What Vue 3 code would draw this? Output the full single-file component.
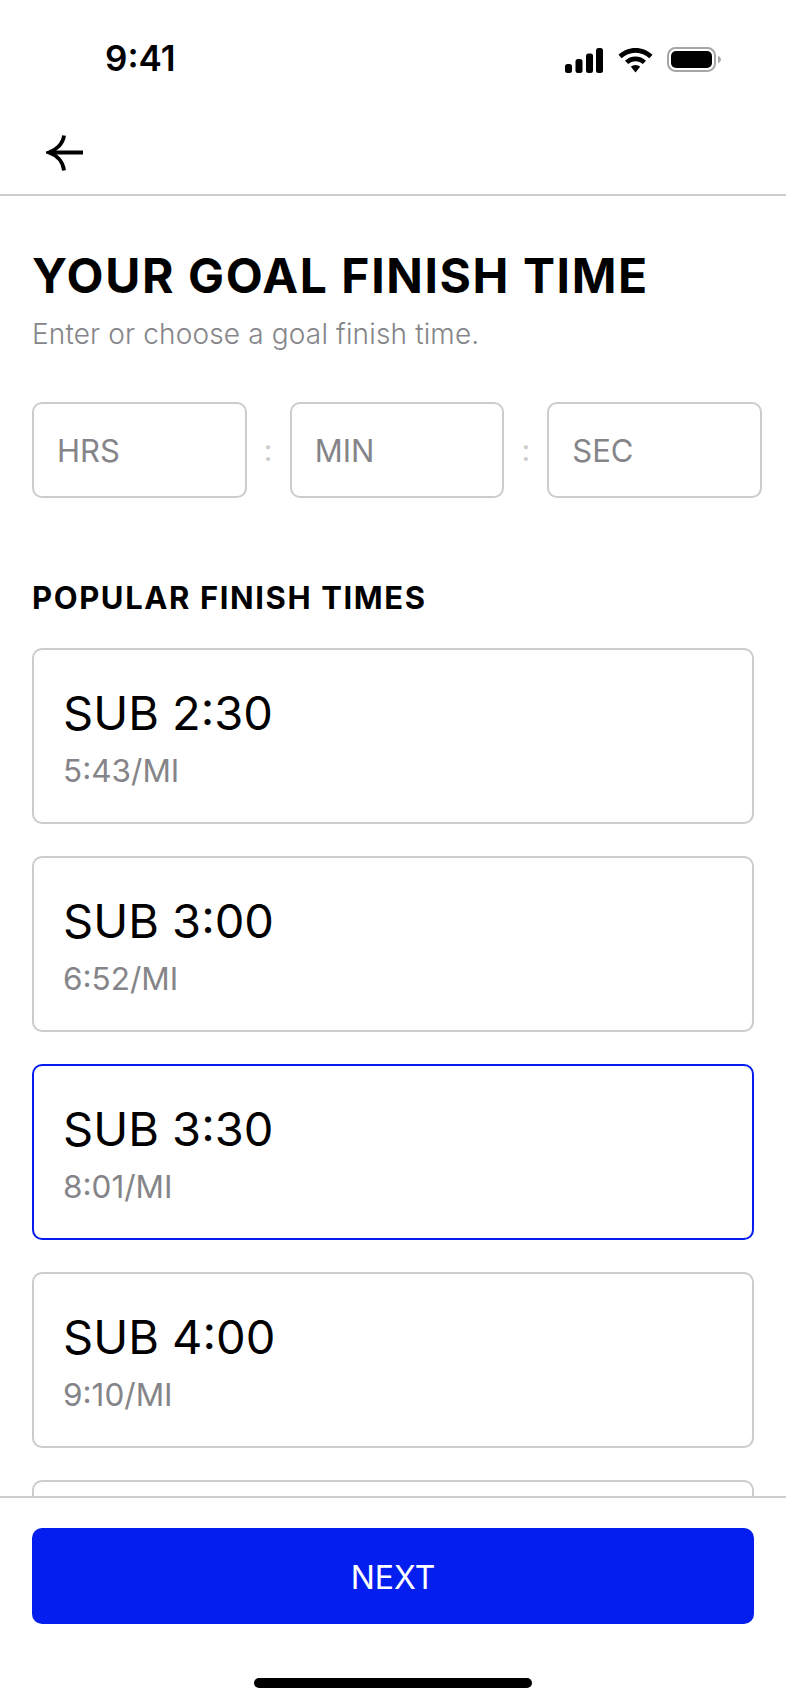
<template>
  <div class="screen">
    <!-- Status bar -->
    <div class="status-bar">
      <span class="clock">9:41</span>
      <div class="status-icons">
        <svg class="ic-signal" width="38" height="25" viewBox="0 0 38 25">
          <rect x="0" y="16" width="7" height="9" rx="2.5" />
          <rect x="10.5" y="11" width="7" height="14" rx="2.5" />
          <rect x="21" y="5.5" width="7" height="19.5" rx="2.5" />
          <rect x="31" y="0" width="7" height="25" rx="2.5" />
        </svg>
        <svg class="ic-wifi" width="35" height="25" viewBox="0 0 35 25">
          <path d="M17.5 0C11 0 5 2.600 0.500 6.800L3.700 10.200C7.300 6.800 12.200 4.700 17.500 4.700C22.800 4.700 27.700 6.800 31.300 10.200L34.500 6.800C30 2.600 24 0 17.500 0Z" />
          <path d="M17.500 8.500C13.500 8.500 9.800 10.100 7 12.700L10.200 16.100C12.100 14.300 14.700 13.200 17.500 13.200C20.300 13.200 22.900 14.300 24.800 16.100L28 12.700C25.200 10.100 21.500 8.500 17.500 8.500Z" />
          <path d="M17.500 17C15.700 17 14.100 17.700 12.900 18.800L17.500 24.500L22.100 18.800C20.900 17.700 19.300 17 17.500 17Z" />
        </svg>
        <svg class="ic-battery" width="55" height="25" viewBox="0 0 55 25">
          <rect x="1" y="1" width="47" height="23" rx="7.5" fill="none" stroke="#a6a6a6" stroke-width="2" />
          <rect x="4" y="4" width="41" height="17" rx="5" />
          <path d="M51 9v7c1.800-.6 3-2 3-3.500S52.800 9.600 51 9Z" fill="#a6a6a6" />
        </svg>
      </div>
    </div>

    <!-- Nav -->
    <div class="nav">
      <svg class="back" width="38" height="36" viewBox="0 0 38 36" fill="none" stroke="#000" stroke-width="3.800">
        <path d="M37 17.500H3" />
        <path d="M18 0.500C17 9 10 15 3 17.500C10 20 17 26 18 35.500" />
      </svg>
    </div>

    <!-- Scrolling content -->
    <main class="content">
      <h1 class="title">YOUR GOAL FINISH TIME</h1>
      <p class="subtitle">Enter or choose a goal finish time.</p>

      <div class="time-row">
        <input class="time-input" placeholder="HRS" />
        <span class="sep">:</span>
        <input class="time-input" placeholder="MIN" />
        <span class="sep">:</span>
        <input class="time-input" placeholder="SEC" />
      </div>

      <h2 class="section-title">POPULAR FINISH TIMES</h2>

      <div class="card-list">
        <div
          v-for="item in times"
          :key="item.label"
          class="card"
          :class="{ selected: item.label === selected }"
          @click="selected = item.label"
        >
          <span class="card-label">{{ item.label }}</span>
          <span class="card-pace">{{ item.pace }}</span>
        </div>
        <div class="card"></div>
      </div>
    </main>

    <!-- Footer -->
    <footer class="footer">
      <button class="next">NEXT</button>
      <div class="home-indicator"></div>
    </footer>
  </div>
</template>

<script setup>
import { ref } from 'vue'

const selected = ref('SUB 3:30')
const times = [
  { label: 'SUB 2:30', pace: '5:43/MI' },
  { label: 'SUB 3:00', pace: '6:52/MI' },
  { label: 'SUB 3:30', pace: '8:01/MI' },
  { label: 'SUB 4:00', pace: '9:10/MI' },
]
</script>

<style>
html, body { margin: 0; background: #fff; }
</style>

<style scoped>
.screen {
  width: 786px; height: 1704px;
  display: flex; flex-direction: column;
  background: #fff; color: #000;
  font-family: Inter, 'Liberation Sans', sans-serif;
  overflow: hidden;
}

/* Status bar */
.status-bar {
  height: 118px; flex-shrink: 0;
  display: flex; align-items: flex-start; justify-content: space-between;
  padding: 0 64px 0 105px; box-sizing: border-box;
}
.clock {
  margin-top: 38px;
  font-size: 35px; line-height: 40px; font-weight: 600;
}
.status-icons { display: flex; align-items: flex-start; gap: 14px; margin-top: 48px; }
.ic-signal, .ic-wifi, .ic-battery { fill: #000; display: block; }
.ic-signal { margin-right: 1px; }
.ic-battery { margin-top: -1px; }

/* Nav */
.nav {
  height: 78px; flex-shrink: 0; box-sizing: border-box;
  padding: 17px 0 0 46px;
  border-bottom: 2px solid #cccccc;
}
.back { display: block; }

/* Content */
.content {
  flex: 1; min-height: 0; overflow: hidden;
  padding: 0 32px;
  border-bottom: 2px solid #cccccc;
}
.title {
  margin: 55px 0 0;
  font-size: 48px; line-height: 50px; font-weight: 700;
  letter-spacing: 1.6px;
}
.subtitle {
  margin: 15px 0 0;
  font-size: 28px; line-height: 36px; font-weight: 300;
  letter-spacing: 0.15px;
  color: #858589;
}

.time-row {
  margin-top: 50px; width: 730px;
  display: grid; grid-template-columns: 1fr 43px 1fr 43px 1fr;
  align-items: center;
}
.time-input {
  width: 100%; height: 96px; box-sizing: border-box;
  padding: 0 22px 0 23px;
  border: 2px solid #cccccc; border-radius: 10px;
  background: #fff; outline: none;
  font-family: inherit; font-size: 31px; color: #000;
}
.time-input::placeholder { color: #858589; opacity: 1; }
.sep { text-align: center; font-size: 30px; color: #cccccc; }

.section-title {
  margin: 82px 0 0;
  font-size: 31px; line-height: 36px; font-weight: 700;
  letter-spacing: 1.6px;
}

.card-list {
  margin-top: 32px; width: 722px;
  display: flex; flex-direction: column; gap: 32px;
}
.card {
  height: 176px; box-sizing: border-box; flex-shrink: 0;
  padding: 32px 29px 0;
  border: 2px solid #cccccc; border-radius: 10px;
  display: flex; flex-direction: column; gap: 8px;
}
.card.selected { border-color: #031eee; }
.card-label { font-size: 47px; line-height: 62px; font-weight: 400; }
.card-pace { font-size: 31.5px; line-height: 38px; color: #858589; }

/* Footer */
.footer {
  height: 206px; flex-shrink: 0; box-sizing: border-box;
  padding: 30px 32px 0;
  display: flex; flex-direction: column; align-items: center;
}
.next {
  width: 100%; height: 96px; padding: 2px 0 0;
  border: none; border-radius: 10px;
  background: #031eee; color: #fff;
  font-family: inherit; font-size: 32px; font-weight: 400;
}
.home-indicator {
  margin-top: 54px;
  width: 278px; height: 10px; border-radius: 5px; background: #000;
}
</style>
